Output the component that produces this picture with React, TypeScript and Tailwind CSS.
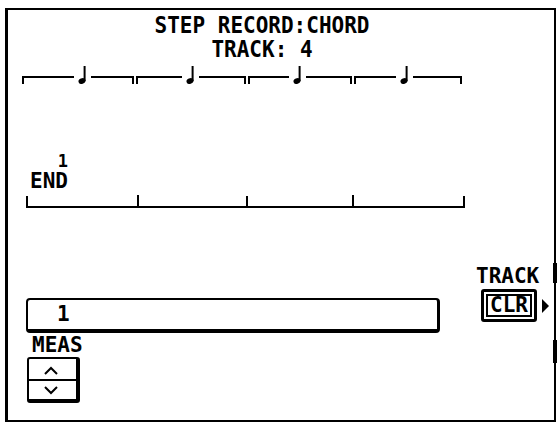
import React from 'react';

// segment bounds and note position along the beat ruler (svg local x)
const beats: [number, number, number][] = [
  [2, 112, 61],
  [116, 224, 169],
  [228, 330, 276],
  [334, 440, 383],
];

const BeatRuler: React.FC = () => (
  <svg width="448" height="26" viewBox="0 0 448 26" className="ml-[13px] mt-[2px] block">
    {beats.map(([a, b, n]) => (
      <g key={a} stroke="#000" strokeWidth="2" fill="none">
        <path d={`M${a} 22 V15 H${n - 8} M${n + 9} 15 H${b} V22`} />
        <ellipse cx={n} cy={19} rx={3.6} ry={2.8} transform={`rotate(-25 ${n} 19)`} fill="#000" stroke="none" />
        <path d={`M${n + 2.6} 19 V4`} />
      </g>
    ))}
  </svg>
);

const MeasureRuler: React.FC = () => (
  <svg width="448" height="16" viewBox="0 0 448 16" className="ml-[13px] mt-[2px] block">
    <path d="M6 2 V13 H443 V2 M117 1 V13 M226 2 V13 M332 1 V13" stroke="#000" strokeWidth="2" fill="none" />
  </svg>
);

const Chevron: React.FC<{ down?: boolean }> = ({ down }) => (
  <svg width="14" height="9" viewBox="0 0 14 9">
    <polyline points={down ? '1,1 7,7 13,1' : '1,8 7,2 13,8'} stroke="#000" strokeWidth="2" fill="none" />
  </svg>
);

export default function App() {
  return (
    <div className="h-[423px] w-[557px] overflow-hidden bg-white font-['DejaVu_Sans_Mono','Liberation_Mono',monospace] font-bold text-black">
      <div className="relative ml-[5px] mt-[8px] flex h-[414px] w-[551px] flex-col border-l-[3px] border-t-2 border-r-2 border-b-2 border-black">
        {/* soft key markers on the right edge */}
        <div className="absolute right-[-3px] top-[253px] h-[20px] w-[4px] bg-black" />
        <div className="absolute right-[-3px] top-[330px] h-[23px] w-[4px] bg-black" />

        <div className="mt-[5px] w-[508px] scale-y-110 text-center text-[21px] leading-[21px]">STEP RECORD:CHORD</div>
        <div className="mt-[3px] w-[508px] scale-y-110 text-center text-[21px] leading-[21px] whitespace-pre">TRACK: 4</div>

        <BeatRuler />

        <div className="ml-[22px] mt-[65px] flex w-[38px] flex-col">
          <div className="text-right text-[17px] leading-[17px]">1</div>
          <div className="mt-[1px] text-[21px] leading-[21px]">END</div>
        </div>

        <MeasureRuler />

        <div className="flex items-start">
          <div className="ml-[18px] mt-[88px] flex flex-col items-start">
            <div className="flex h-[35px] w-[414px] items-center rounded-[4px] border-2 border-r-[3px] border-b-4 border-black pl-[29px] text-[21px] leading-[21px]">
              1
            </div>
            <div className="ml-[6px] mt-[2px] text-[21px] leading-[21px]">MEAS</div>
            <div className="ml-[1px] mt-[1px] flex h-[46px] w-[53px] flex-col rounded-[3px] border-2 border-r-4 border-b-4 border-black">
              <div className="flex flex-1 items-center justify-center border-b-2 border-black pr-[4px] pt-[2px]">
                <Chevron />
              </div>
              <div className="flex flex-1 items-center justify-center pr-[3px]">
                <Chevron down />
              </div>
            </div>
          </div>

          <div className="ml-[36px] mt-[56px] flex flex-col">
            <div className="text-[21px] leading-[21px]">TRACK</div>
            <div className="mt-[2px] ml-[5px] flex items-center">
              <div className="flex h-[33px] w-[56px] rounded-[3px] border-[3px] border-black p-[2px]">
                <div className="flex flex-1 items-center justify-center border-2 border-black text-[21px] leading-[19px]">
                  CLR
                </div>
              </div>
              <svg width="9" height="14" viewBox="0 0 9 14" className="ml-[4px]">
                <polygon points="1,0 8,7 1,14" fill="#000" />
              </svg>
            </div>
          </div>
        </div>
      </div>
    </div>
  );
}
